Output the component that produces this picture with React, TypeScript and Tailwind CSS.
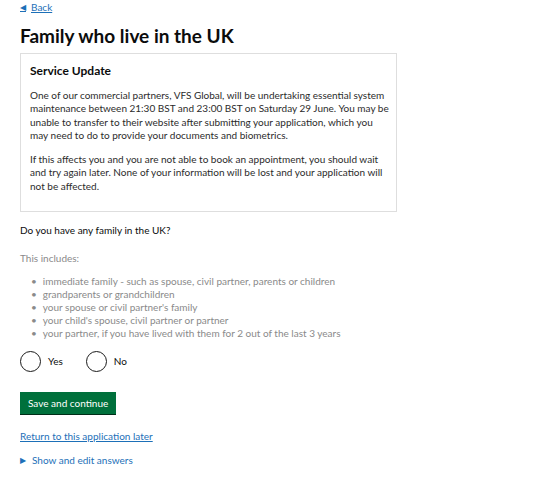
const items = [
  'immediate family - such as spouse, civil partner, parents or children',
  'grandparents or grandchildren',
  "your spouse or civil partner's family",
  "your child's spouse, civil partner or partner",
  'your partner, if you have lived with them for 2 out of the last 3 years',
]

function Radio({ label }: { label: string }) {
  return (
    <label className="flex items-center gap-[7px]">
      <span className="block w-[21px] h-[21px] rounded-full border-[1.5px] border-[#1a1a1a]" />
      <span className="text-[10px] text-[#0b0c0c]">{label}</span>
    </label>
  )
}

export default function App() {
  return (
    <div className="min-h-[481px] bg-white px-5 pt-[1px] font-['Lato',sans-serif] text-[#0b0c0c]">
      <a href="#" className="flex items-center gap-[5px] text-[10px] leading-[13px] text-[#1d70b8] underline">
        <span className="text-[8px] no-underline">◀</span>Back
      </a>

      <h1 className="mt-[10px] text-[19px] leading-[23px] font-bold">Family who live in the UK</h1>

      <div className="mt-[6px] w-[377px] border border-[#dedede] pl-[9px] pr-[4px] pt-[9px] pb-[18px]">
        <h2 className="text-[12px] leading-[16px] font-bold">Service Update</h2>
        <p className="mt-[10px] text-[10px] leading-[13.3px] text-[#2b2b2b]">
          One of our commercial partners, VFS Global, will be undertaking essential system maintenance between 21:30 BST and 23:00 BST on Saturday 29 June. You may be unable to transfer to their website after submitting your application, which you may need to do to provide your documents and biometrics.
        </p>
        <p className="mt-[11px] text-[10px] leading-[13.3px] text-[#2b2b2b]">
          If this affects you and you are not able to book an appointment, you should wait and try again later. None of your information will be lost and your application will not be affected.
        </p>
      </div>

      <p className="mt-[12px] text-[10px] leading-[13px]">Do you have any family in the UK?</p>
      <p className="mt-[15px] text-[10px] leading-[13px] text-[#8a8a8a]">This includes:</p>
      <ul className="mt-[10px] pl-[11px] text-[10px] leading-[13px] text-[#8a8a8a]">
        {items.map((item) => (
          <li key={item} className="flex gap-[6px]">
            <span>•</span>
            <span>{item}</span>
          </li>
        ))}
      </ul>

      <div className="mt-[11px] flex items-center gap-[23px]">
        <Radio label="Yes" />
        <Radio label="No" />
      </div>

      <button className="mt-[20px] block bg-[#00703c] px-[8px] h-[22px] text-[10px] text-white shadow-[0_1px_0_#002d18]">
        Save and continue
      </button>

      <a href="#" className="mt-[16px] block text-[10px] leading-[13px] text-[#1d70b8] underline">
        Return to this application later
      </a>

      <div className="mt-[11px] flex items-center gap-[6px] text-[10px] leading-[13px] text-[#1d70b8]">
        <span className="text-[8px]">▶</span>
        <span>Show and edit answers</span>
      </div>
    </div>
  )
}
